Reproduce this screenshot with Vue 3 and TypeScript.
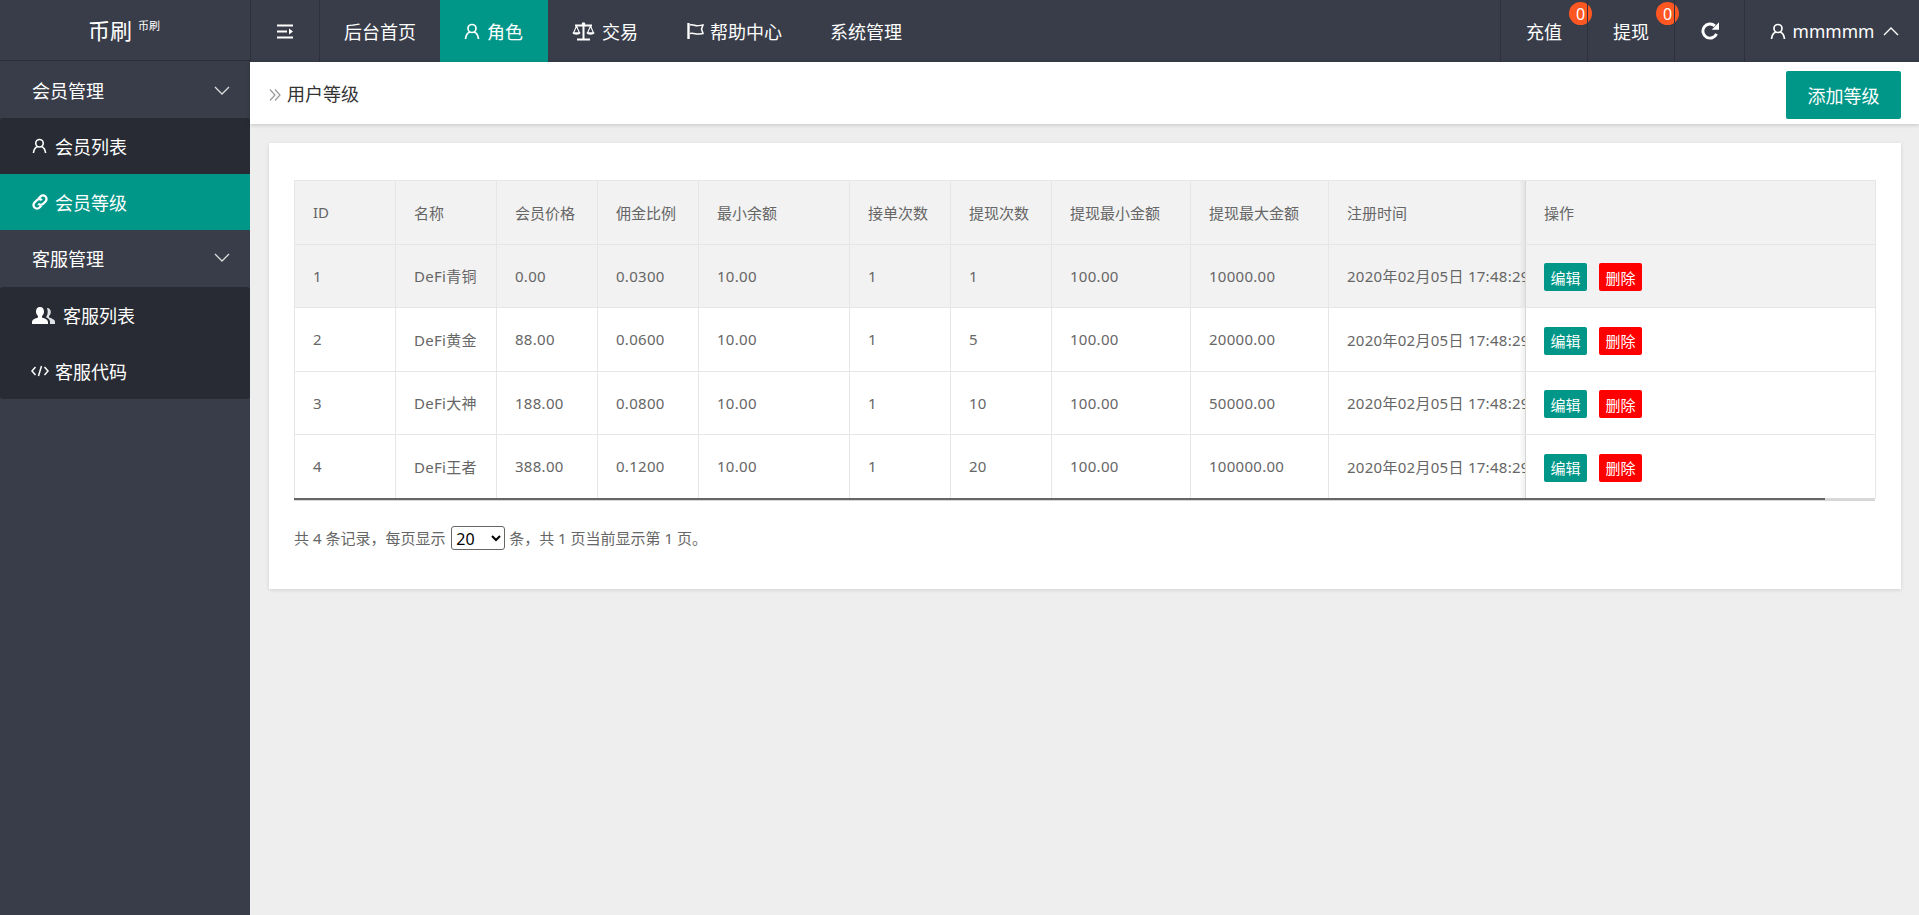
<script setup lang="ts">
interface Level { id: number; name: string; price: string; rate: string; min: string; orders: number; draws: number; low: string; high: string; time: string }
const columns: string[] = ['ID', '名称', '会员价格', '佣金比例', '最小余额', '接单次数', '提现次数', '提现最小金额', '提现最大金额', '注册时间', '操作']
const widths: number[] = [101, 101, 101, 101, 151, 101, 101, 139, 138, 197, 350]
const t = '2020年02月05日 17:48:29'
const rows: Level[] = [
  { id: 1, name: 'DeFi青铜', price: '0.00', rate: '0.0300', min: '10.00', orders: 1, draws: 1, low: '100.00', high: '10000.00', time: t },
  { id: 2, name: 'DeFi黄金', price: '88.00', rate: '0.0600', min: '10.00', orders: 1, draws: 5, low: '100.00', high: '20000.00', time: t },
  { id: 3, name: 'DeFi大神', price: '188.00', rate: '0.0800', min: '10.00', orders: 1, draws: 10, low: '100.00', high: '50000.00', time: t },
  { id: 4, name: 'DeFi王者', price: '388.00', rate: '0.1200', min: '10.00', orders: 1, draws: 20, low: '100.00', high: '100000.00', time: t },
]
const pageSize = 20
</script>

<template>
  <div class="shell">
    <header class="top">
      <div class="logo"><span class="logo-main">币刷</span><sup class="logo-sub">币刷</sup></div>
      <nav class="nav">
        <a class="burger">
          <svg width="16" height="15" viewBox="0 0 16 15"><path d="M0 1.500h16M0 7.500h10M0 13.500h16" stroke="#fff" stroke-width="2.200" fill="none"/><path d="M12 4.500l4 3-4 3z" fill="#fff"/></svg>
        </a>
        <a class="item">后台首页</a>
        <a class="item on">
          <svg class="ic" width="16" height="17" viewBox="0 0 16 17"><circle cx="8" cy="5.500" r="4" fill="none" stroke="#fff" stroke-width="1.700"/><path d="M1.500 16c.4-3.600 2.400-6.400 4.500-7M14.500 16c-.4-3.600-2.400-6.400-4.500-7" fill="none" stroke="#fff" stroke-width="1.700"/></svg>角色
        </a>
        <a class="item trade">
          <svg class="ic" width="23" height="19" viewBox="0 0 23 19"><circle cx="11.500" cy="2" r="1.800" fill="#fff"/><path d="M11.500 2v15M5 17.500h13M3 3.500h17" stroke="#fff" stroke-width="2" fill="none"/><path d="M4.500 4L1.500 11h6zM18.500 4L15.500 11h6z" fill="none" stroke="#fff" stroke-width="1.100"/><path d="M.5 10.500h8c-.5 3-7.500 3-8 0zM14.500 10.500h8c-.5 3-7.500 3-8 0z" fill="#fff"/></svg>交易
        </a>
        <a class="item">
          <svg class="ic flag" width="18" height="16" viewBox="0 0 18 16"><path d="M1.500 0v16" stroke="#fff" stroke-width="2.400"/><path d="M3 2c3-1 5 1 7 .8 2 0 4-.6 6-.8l-1.500 4 1.500 4.500c-2 .3-4 .8-6 .5-2-.2-4-1.300-7-.5" fill="none" stroke="#fff" stroke-width="1.500"/></svg>帮助中心
        </a>
        <a class="item">系统管理</a>
        <div class="right">
          <a class="item edge">充值<b class="badge">0</b></a>
          <a class="item edge">提现<b class="badge">0</b></a>
          <a class="item edge refresh">
            <svg width="18" height="18" viewBox="0 0 16 16"><path d="M13.800 10.500A6.300 6.300 0 1 1 12.300 3.400" fill="none" stroke="#fff" stroke-width="2.600"/><path d="M9.500 6.800H16V.3z" fill="#fff"/></svg>
          </a>
          <a class="item edge user">
            <svg class="ic" width="16" height="17" viewBox="0 0 16 17"><circle cx="8" cy="5.500" r="4" fill="none" stroke="#fff" stroke-width="1.700"/><path d="M1.500 16c.4-3.600 2.400-6.400 4.500-7M14.500 16c-.4-3.600-2.400-6.400-4.500-7" fill="none" stroke="#fff" stroke-width="1.700"/></svg>
            <span>mmmmm</span>
            <svg class="chev" width="16" height="9" viewBox="0 0 16 9"><path d="M1 8l7-7 7 7" fill="none" stroke="#fff" stroke-width="1.400"/></svg>
          </a>
        </div>
      </nav>
    </header>
    <div class="body">
      <aside class="side">
        <div class="head">会员管理<svg width="16" height="9" viewBox="0 0 16 9"><path d="M1 1l7 7 7-7" fill="none" stroke="#ddd" stroke-width="1.300"/></svg></div>
        <div class="sub">
          <a class="link user-link">
            <svg width="15" height="16" viewBox="0 0 16 17"><circle cx="8" cy="5.500" r="4" fill="none" stroke="#fff" stroke-width="1.700"/><path d="M1.500 16c.4-3.600 2.400-6.400 4.500-7M14.500 16c-.4-3.600-2.400-6.400-4.500-7" fill="none" stroke="#fff" stroke-width="1.700"/></svg>会员列表
          </a>
          <a class="link active">
            <svg width="18" height="18" viewBox="0 0 18 18"><path d="M7.500 5.500l2-2a3.400 3.400 0 0 1 5 5l-2.300 2.300a3.400 3.400 0 0 1-5 0M10.500 12.500l-2 2a3.400 3.400 0 0 1-5-5l2.300-2.300a3.400 3.400 0 0 1 5 0" fill="none" stroke="#fff" stroke-width="2.300"/></svg>会员等级
          </a>
        </div>
        <div class="head second">客服管理<svg width="16" height="9" viewBox="0 0 16 9"><path d="M1 1l7 7 7-7" fill="none" stroke="#ddd" stroke-width="1.300"/></svg></div>
        <div class="sub">
          <a class="link wide">
            <svg width="24" height="17" viewBox="0 0 24 17"><path d="M8 0c2.700 0 4 2 4 4.500 0 2-1 3.500-2 4.500v1.500c3 1 6 2 6 4.500v2H0v-2c0-2.500 3-3.500 6-4.500V9C5 8 4 6.500 4 4.500 4 2 5.300 0 8 0z" fill="#fff"/><path d="M15 1c2.500 0 3.800 1.800 3.800 4 0 1.800-.9 3.300-1.800 4.100v1.300c3 .9 6 2 6 4.400V17h-5v-2.500c0-2-2-3.400-4-4.300 1-1.300 1.700-3.500 1.700-5.700 0-1.200-.3-2.300-.9-3.200.3-.2.700-.3 1.200-.3z" fill="#dfe3e6"/></svg>客服列表
          </a>
          <a class="link code-link">
            <svg width="18" height="12" viewBox="0 0 18 12"><path d="M4.500 2L1 6l3.500 4M13.500 2L17 6l-3.500 4M10.500 1L7.500 11" fill="none" stroke="#fff" stroke-width="1.500"/></svg>客服代码
          </a>
        </div>
      </aside>
      <main class="main">
        <div class="crumb">
          <div class="crumb-title">
            <svg width="12" height="14" viewBox="0 0 12 14"><path d="M1 1.500L6 7l-5 5.500M6 1.500L11 7l-5 5.500" fill="none" stroke="#999" stroke-width="1.200"/></svg>
            用户等级
          </div>
          <button class="add">添加等级</button>
        </div>
        <section class="card">
          <div class="table-wrap">
            <table class="grid">
              <colgroup><col v-for="(w, i) in widths" :key="i" :style="{ width: w + 'px' }" /></colgroup>
              <thead>
                <tr><th v-for="(c, i) in columns" :key="c" :class="{ fixed: i === 10 }">{{ c }}</th></tr>
              </thead>
              <tbody>
                <tr v-for="r in rows" :key="r.id" :class="{ hl: r.id === 1 }">
                  <td>{{ r.id }}</td><td>{{ r.name }}</td><td>{{ r.price }}</td><td>{{ r.rate }}</td><td>{{ r.min }}</td>
                  <td>{{ r.orders }}</td><td>{{ r.draws }}</td><td>{{ r.low }}</td><td>{{ r.high }}</td><td class="clip">{{ r.time }}</td>
                  <td class="fixed"><span class="ops"><a class="btn edit">编辑</a><a class="btn del">删除</a></span></td>
                </tr>
              </tbody>
            </table>
            <div class="bar"><div class="thumb"></div></div>
          </div>
          <div class="pager">
            共 4 条记录，每页显示
            <select class="size" :value="pageSize"><option :value="20">20</option><option :value="50">50</option></select>
            条，共 1 页当前显示第 1 页。
          </div>
        </section>
      </main>
    </div>
  </div>
</template>

<style scoped>
.shell { width: 1919px; height: 915px; display: flex; flex-direction: column; background: #eee; overflow: hidden; font-family: "Noto Sans", "Noto Sans CJK SC", sans-serif; }
.top { height: 62px; flex: none; display: flex; background: #393d49; color: #fff; }
.logo { width: 250px; flex: none; height: 61px; border-bottom: 1px solid #2b2e38; display: flex; justify-content: center; align-items: center; padding-right: 2px; box-sizing: border-box; }
.logo-main { font-size: 22px; line-height: 1; }
.logo-sub { font-size: 11px; margin-left: 6px; margin-top: -10px; line-height: 1; }
.nav { flex: 1; display: flex; height: 62px; }
.burger { width: 70px; box-sizing: border-box; display: flex; align-items: center; justify-content: center; border-left: 1px solid #2f323d; border-right: 1px solid #2f323d; }
.item { position: relative; display: flex; align-items: center; padding: 0 24px; font-size: 18px; color: #fff; white-space: nowrap; }
.item.on { background: #009688; padding-right: 25px; }
.item.trade { padding-right: 25px; }
.ic { margin-right: 7px; }
.ic.flag { margin-right: 5px; }
.right { margin-left: auto; display: flex; }
.edge { border-left: 1px solid #2f323d; box-sizing: border-box; width: 87px; justify-content: center; padding: 0; }
.refresh { width: 70px; }
.user { width: 175px; padding-left: 5px; }
.user span { font-size: 17.500px; }
.chev { margin-left: 9px; }
.badge { position: absolute; top: 2px; right: -5px; width: 23px; height: 23px; border-radius: 50%; background: #ff5722; font-size: 16px; font-weight: 400; display: flex; align-items: center; justify-content: center; line-height: 1; }
.body { flex: 1; display: flex; min-height: 0; }
.side { width: 250px; flex: none; background: #393d49; color: #fff; }
.head { height: 57px; box-sizing: border-box; padding: 0 20px 0 32px; font-size: 18px; display: flex; align-items: center; justify-content: space-between; }
.head:first-child { height: 56px; }
.head.second { padding-bottom: 2px; }
.sub { background: #282b33; border-radius: 3px; }
.link { height: 56px; display: flex; align-items: center; padding-left: 32px; font-size: 18px; color: #fff; gap: 7px; }
.link.user-link { gap: 8px; }
.link.code-link { padding-left: 31px; gap: 6px; }
.link.active { background: #009688; padding-left: 31px; gap: 6px; }
.link.wide { gap: 7px; }
.main { flex: 1; min-width: 0; }
.crumb { height: 62px; background: #fff; display: flex; align-items: center; justify-content: space-between; padding: 0 18px 0 19px; box-shadow: 0 1px 4px rgba(0, 0, 0, .18); color: #333; position: relative; }
.crumb-title { display: flex; align-items: center; gap: 6px; font-size: 18px; }
.crumb-title svg { margin-top: 3px; }
.add { width: 115px; height: 48px; border: 0; border-radius: 2px; background: #009688; color: #fff; font: inherit; font-size: 18px; margin-top: 4px; padding: 0; }
.card { margin: 19px 18px 0 19px; height: 446px; box-sizing: border-box; background: #fff; padding: 37px 25px 0; box-shadow: 0 1px 4px rgba(0, 0, 0, .12); }
.table-wrap { position: relative; width: 1581px; }
.grid { width: 1581px; table-layout: fixed; border-collapse: collapse; font-size: 15px; color: #666; }
.grid th, .grid td { height: 63.500px; padding: 0 18px; box-sizing: border-box; border: 1px solid #e6e6e6; text-align: left; font-weight: 400; white-space: nowrap; overflow: hidden; }
.grid td { letter-spacing: .28px; }
.grid thead tr, .grid tr.hl { background: #f2f2f2; }
.grid td.clip { text-overflow: clip; padding-right: 0; }
.grid .fixed { position: relative; overflow: visible; }
.grid .fixed::before { content: ""; position: absolute; top: 0; bottom: 0; left: -7px; width: 7px; background: linear-gradient(to left, rgba(0, 0, 0, .07), rgba(0, 0, 0, 0)); }
.bar { height: 3px; background: #d8d8d8; margin-top: -1px; position: relative; }
.thumb { width: 1531px; height: 2px; background: #666; }
.ops { display: flex; gap: 12px; margin-top: 3px; letter-spacing: 0; }
.btn { width: 43px; height: 28px; border-radius: 2px; color: #fff; font-size: 15px; display: flex; align-items: center; justify-content: center; }
.edit { background: #009688; }
.del { background: #f00; }
.pager { margin-top: 25px; font-size: 15px; line-height: 24px; color: #666; white-space: normal; }
.size { width: 54px; height: 24px; margin: 0 0 0 2px; vertical-align: top; font-size: 16px; font-family: inherit; color: #000; background: #fff; border: 1px solid #666; border-radius: 3px; }
</style>
